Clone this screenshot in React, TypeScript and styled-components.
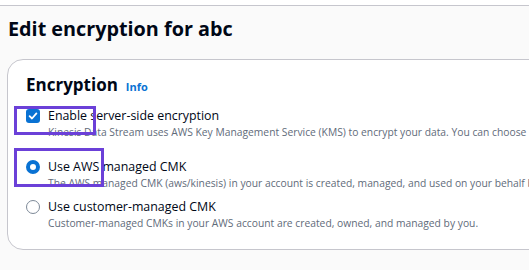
import styled, { createGlobalStyle } from "styled-components";

const GlobalStyle = createGlobalStyle`
  html, body {
    margin: 0;
    padding: 0;
    background: #ffffff;
    overflow: hidden;
  }
  body {
    font-family: "Open Sans", "Noto Sans", sans-serif;
    color: #000716;
  }
`;

type Option = {
  checked: boolean;
  label: string;
  description: string;
};

const options: Option[] = [
  {
    checked: true,
    label: "Use AWS managed CMK",
    description:
      "The AWS managed CMK (aws/kinesis) in your account is created, managed, and used on your behalf by Kinesis Data Streams.",
  },
  {
    checked: false,
    label: "Use customer-managed CMK",
    description: "Customer-managed CMKs in your AWS account are created, owned, and managed by you.",
  },
];

export default function App() {
  return (
    <>
      <GlobalStyle />
      <Page>
        <Title>Edit encryption for abc</Title>
        <Card>
          <CardHeader>
            <Heading>Encryption</Heading>
            <InfoLink>Info</InfoLink>
          </CardHeader>
          <Field>
            <Checkbox $checked>
              <svg width="10" height="10" viewBox="0 0 10 10">
                <path d="M1.6 5.2 L4 7.5 L8.4 2.4" fill="none" stroke="#fff" strokeWidth="1.8" strokeLinecap="round" strokeLinejoin="round" />
              </svg>
            </Checkbox>
            <FieldText>
              <Label>Enable server-side encryption</Label>
              <Description>
                Kinesis Data Stream uses AWS Key Management Service (KMS) to encrypt your data. You can choose between an AWS managed CMK or a customer-managed CMK.
              </Description>
            </FieldText>
          </Field>
          <RadioGroup>
            {options.map((o) => (
              <Field key={o.label}>
                <Radio $checked={o.checked} />
                <FieldText>
                  <Label>{o.label}</Label>
                  <Description>{o.description}</Description>
                </FieldText>
              </Field>
            ))}
          </RadioGroup>
        </Card>
        <Highlight style={{ left: 14, top: 100, width: 82, height: 29 }} />
        <Highlight style={{ left: 14, top: 142, width: 90, height: 39 }} />
      </Page>
    </>
  );
}

const Page = styled.div`
  position: relative;
  margin-top: 5px;
  border-top: 1px solid #c6c6cd;
  background: #fafafa;
  height: 265px;
`;

const Title = styled.h1`
  margin: 0;
  padding: 9px 0 0 8px;
  font-size: 19.8px;
  line-height: 28px;
  font-weight: 700;
  color: #000716;
`;

const Card = styled.section`
  margin: 16px 0 0 7px;
  width: 640px;
  height: 191px;
  box-sizing: border-box;
  border: 1px solid #c6c6cd;
  border-radius: 16px;
  background: #ffffff;
  padding: 14px 0 0 18px;
`;

const CardHeader = styled.div`
  display: flex;
  align-items: baseline;
  gap: 8px;
  margin-bottom: 11px;
`;

const Heading = styled.h2`
  margin: 0;
  font-size: 17px;
  line-height: 22px;
  font-weight: 700;
  color: #000716;
`;

const InfoLink = styled.a`
  font-size: 11px;
  font-weight: 700;
  color: #0972d3;
`;

const Field = styled.div`
  display: flex;
  align-items: flex-start;
  gap: 8px;
`;

const FieldText = styled.div`
  display: flex;
  flex-direction: column;
  white-space: nowrap;
`;

const Label = styled.span`
  font-size: 12.4px;
  line-height: 17px;
  color: #000716;
`;

const Description = styled.span`
  font-size: 10.3px;
  line-height: 17px;
  color: #5f6b7a;
`;

const RadioGroup = styled.div`
  display: flex;
  flex-direction: column;
  gap: 6px;
  margin-top: 17px;
`;

const Checkbox = styled.span<{ $checked?: boolean }>`
  flex: none;
  width: 14px;
  height: 14px;
  margin-top: 2px;
  box-sizing: border-box;
  border-radius: 3px;
  background: ${(p) => (p.$checked ? "#0972d3" : "#fff")};
  border: ${(p) => (p.$checked ? "none" : "1.5px solid #7d8998")};
  display: flex;
  align-items: center;
  justify-content: center;
`;

const Radio = styled.span<{ $checked?: boolean }>`
  flex: none;
  width: 14px;
  height: 14px;
  margin-top: 2px;
  box-sizing: border-box;
  border-radius: 50%;
  background: #fff;
  border: ${(p) => (p.$checked ? "4px solid #0972d3" : "1.5px solid #7d8998")};
`;

const Highlight = styled.div`
  position: absolute;
  box-sizing: border-box;
  border: 3px solid #6b40d8;
  pointer-events: none;
`;
